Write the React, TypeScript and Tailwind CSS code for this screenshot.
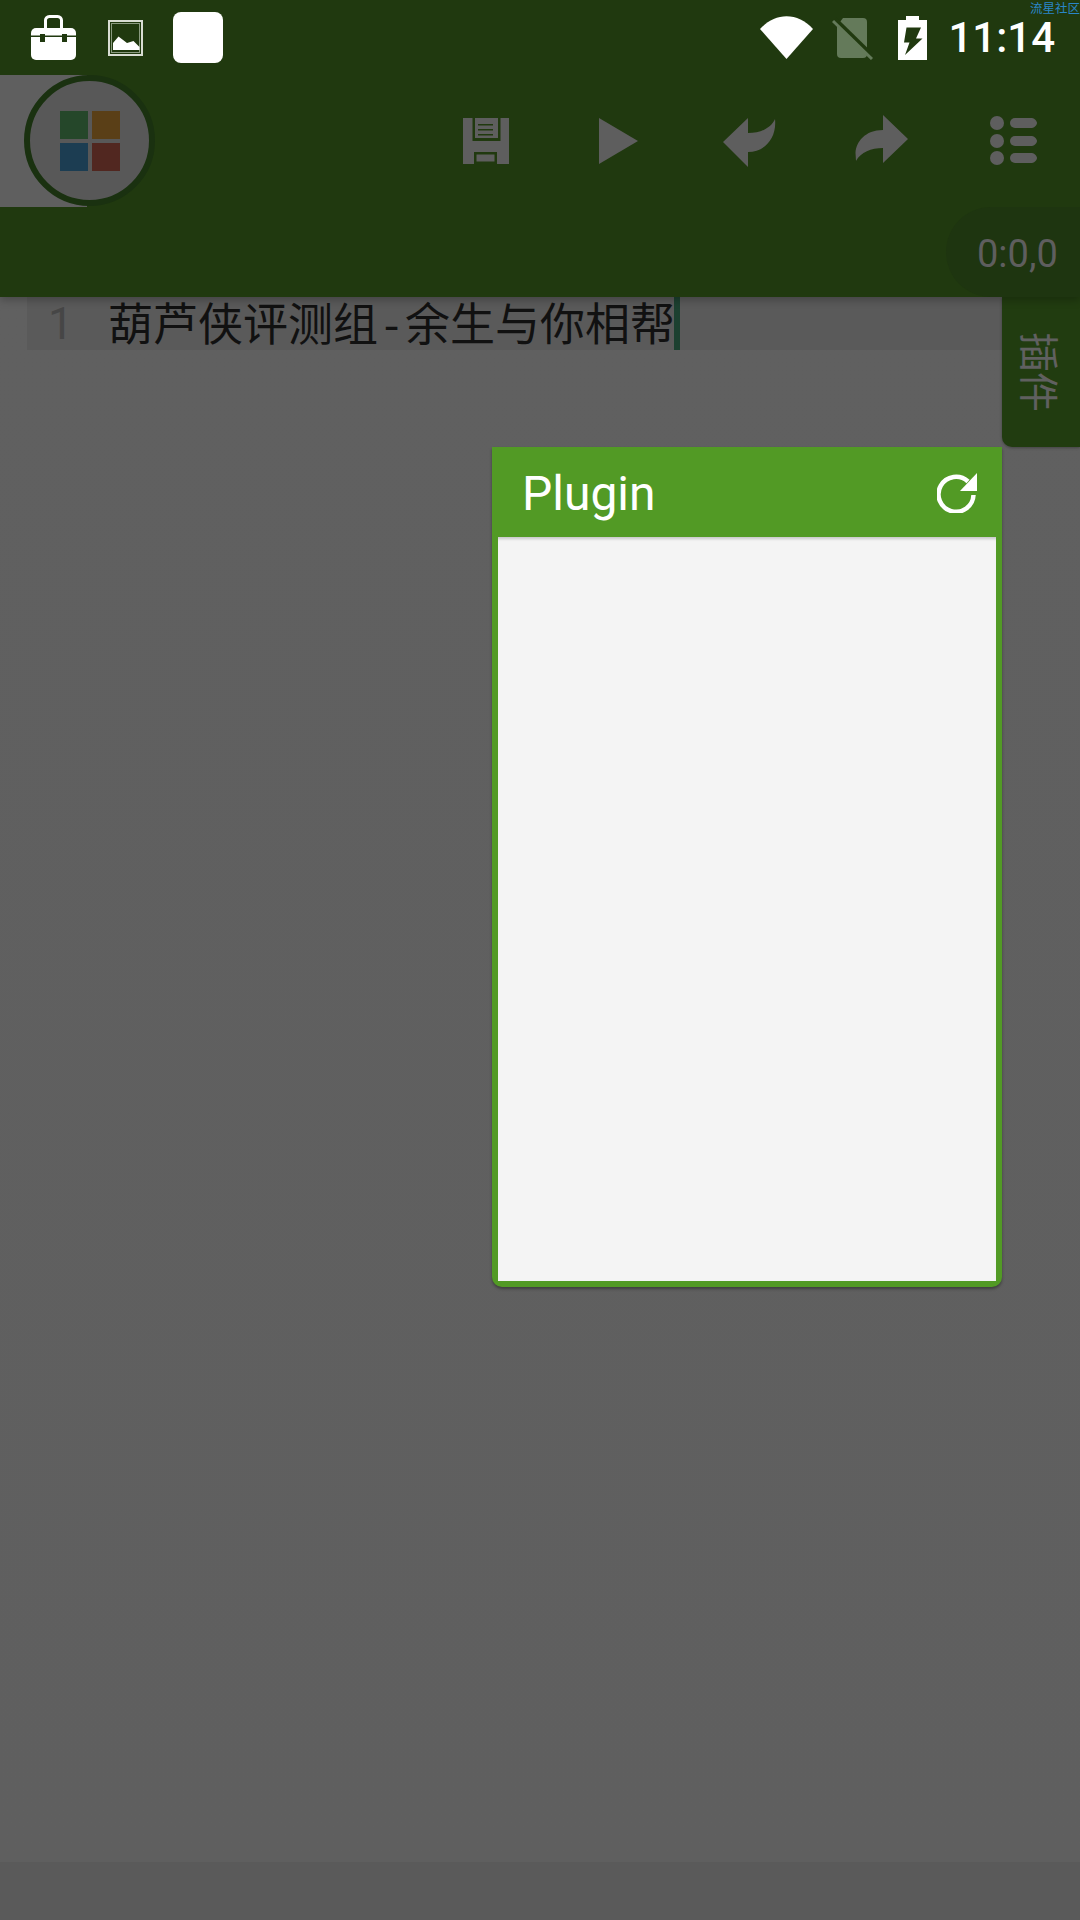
const gray = "#5e5e5e";
const headerGreen = "#20390f";

function Briefcase() {
  return (
    <svg width="45" height="45" viewBox="0 0 45 45" className="ml-[31px] mt-[-1px]">
      <path d="M14.5 13V6a4 4 0 0 1 4-4.5h8a4 4 0 0 1 4 4.5v7" fill="none" stroke="#fff" strokeWidth="3" />
      <rect x="0" y="13" width="45" height="32" rx="5" fill="#fff" />
      <rect x="0" y="20.5" width="45" height="1.5" fill={headerGreen} />
      <rect x="9" y="19" width="5" height="8" fill={headerGreen} />
      <rect x="31" y="19" width="5" height="8" fill={headerGreen} />
    </svg>
  );
}

function PictureIcon() {
  return (
    <svg width="35" height="36" viewBox="0 0 35 36" className="ml-[32px]">
      <rect x="1" y="1" width="33" height="34" fill="none" stroke="#d8ddd3" strokeWidth="2" />
      <rect x="3.5" y="3.5" width="28" height="29" fill="none" stroke="#8a9a80" strokeWidth="1" />
      <path d="M5 30V23l5.5-6.5L19 23l6.5-2 6 6v3z" fill="#fff" />
    </svg>
  );
}

function StatusBar() {
  return (
    <div className="relative flex h-[75px] items-center">
      <Briefcase />
      <PictureIcon />
      <div className="ml-[30px] h-[51px] w-[50px] rounded-[8px] bg-white" />
      <div className="ml-auto flex items-center pr-[25px]">
        <svg width="53" height="43" viewBox="0 0 53 43" className="mt-[-1px]">
          <path d="M0 13C15-4 38-4 53 13L26.5 43z" fill="#fff" />
        </svg>
        <svg width="41" height="44" viewBox="0 0 41 44" className="ml-[19px] mt-px">
          <path d="M11 2h20a4 4 0 0 1 4 4v32a4 4 0 0 1-4 4H9a4 4 0 0 1-4-4V10z" fill="#647a5a" />
          <path d="M3 3l39 38" stroke={headerGreen} strokeWidth="4" />
          <path d="M1 5l39 38" stroke="#647a5a" strokeWidth="3" />
        </svg>
        <svg width="29" height="44" viewBox="0 0 29 44" className="ml-[25px]">
          <path
            fillRule="evenodd"
            fill="#fff"
            d="M8 0h13v4h8v40H0V4h8zM8.5 11.5H23L18 22.5H24.5L7 39 11.5 26.5H6z"
          />
        </svg>
        <span className="ml-[21px] font-['Roboto',sans-serif] text-[42px] leading-none font-medium text-white">
          11:14
        </span>
      </div>
      <span className="absolute top-0 right-0 font-['Noto_Sans_CJK_SC',sans-serif] text-[12.5px] leading-[15px] text-[#2a86c8]">
        流星社区
      </span>
    </div>
  );
}

function Logo() {
  return (
    <div className="relative h-[132px] w-[87px] bg-[#5f5f5f]">
      <div className="absolute top-0 left-[24px] flex h-[131px] w-[131px] items-center justify-center rounded-full border-[6px] border-[#1a3110] bg-[#585858]">
        <div className="grid grid-cols-[28px_28px] grid-rows-[28px_28px] gap-[4px]">
          <div className="bg-[#25472a]" />
          <div className="bg-[#5a3f17]" />
          <div className="bg-[#1c3d52]" />
          <div className="bg-[#512720]" />
        </div>
      </div>
    </div>
  );
}

function ToolButton({ children }: { children: React.ReactNode }) {
  return <div className="flex h-[132px] w-[132px] items-center justify-center">{children}</div>;
}

function Toolbar() {
  return (
    <div className="flex h-[132px] items-center pr-px">
      <Logo />
      <div className="ml-auto flex">
        <ToolButton>
          <svg width="46" height="46" viewBox="0 0 46 46" className="ml-[2px]">
            <rect width="46" height="46" fill={gray} />
            <rect x="9.5" y="0" width="28" height="23" fill={headerGreen} />
            <rect x="12" y="0" width="23" height="20" fill={gray} />
            <rect x="15" y="6" width="15" height="1.5" fill={headerGreen} />
            <rect x="15" y="11" width="15" height="1.5" fill={headerGreen} />
            <rect x="15" y="16" width="15" height="1.5" fill={headerGreen} />
            <rect x="11" y="34" width="23" height="12" fill={headerGreen} />
            <rect x="13.5" y="36.5" width="18" height="7" fill={gray} />
          </svg>
        </ToolButton>
        <ToolButton>
          <svg width="39" height="46" viewBox="0 0 39 46" className="ml-[3px]">
            <path d="M0 0l39 23L0 46z" fill={gray} />
          </svg>
        </ToolButton>
        <ToolButton>
          <svg width="53" height="49" viewBox="0 0 53 49" className="mt-[2px]">
            <path d="M25 0V15C38 15 48 10 52 1 54 20 42 34 25 34V49L0 24z" fill={gray} />
          </svg>
        </ToolButton>
        <ToolButton>
          <svg width="53" height="49" viewBox="0 0 53 49" className="mt-[-3px]">
            <path d="M28 0V15C10 15 1 27 .5 38L1 46C6 37 16 33 28 33V48L53 24z" fill={gray} />
          </svg>
        </ToolButton>
        <ToolButton>
          <svg width="47" height="50" viewBox="0 0 47 50">
            <circle cx="7" cy="7" r="7" fill={gray} />
            <circle cx="7" cy="25" r="7" fill={gray} />
            <circle cx="7" cy="42" r="7" fill={gray} />
            <path d="M25 2h17c2 0 5 3 5 5s-3 5-5 5H25a5 5 0 0 1 0-10z" fill={gray} />
            <path d="M25 20h17c2 0 5 3 5 5s-3 5-5 5H25a5 5 0 0 1 0-10z" fill={gray} />
            <path d="M25 37h17c2 0 5 3 5 5s-3 5-5 5H25a5 5 0 0 1 0-10z" fill={gray} />
          </svg>
        </ToolButton>
      </div>
    </div>
  );
}

function PluginPanel() {
  return (
    <div className="absolute top-[150px] right-[78px] flex h-[840px] w-[510px] flex-col rounded-b-[10px] bg-[#529a25] shadow-[0_2px_3px_rgba(0,0,0,0.35)]">
      <div className="flex h-[90px] items-center justify-between pr-[25px] pl-[30px]">
        <span className="mt-[3px] font-['Roboto',sans-serif] text-[48px] leading-none text-white">Plugin</span>
        <svg width="40" height="41" viewBox="0 0 40 41">
          <path d="M31 9.5A17.5 17.5 0 1 0 36.5 23" fill="none" stroke="#fff" strokeWidth="4.5" />
          <path d="M40 1v18H23z" fill="#fff" />
        </svg>
      </div>
      <div className="mx-[6px] mb-[6px] flex-1 bg-[#f4f4f4] shadow-[inset_0_4px_3px_-2px_rgba(0,0,0,0.18)]" />
    </div>
  );
}

export default function App() {
  return (
    <div className="flex h-[1920px] w-[1080px] flex-col overflow-hidden bg-[#606060]">
      <header className="relative z-10 h-[297px] bg-[#20390f] shadow-[0_3px_8px_rgba(0,0,0,0.25)]">
        <StatusBar />
        <Toolbar />
        <div className="flex justify-end">
          <div className="flex h-[90px] w-[134px] items-center rounded-l-[45px] bg-[#1e3510] pl-[31px]">
            <span className="mt-[4px] font-['Roboto',sans-serif] text-[38px] leading-none text-[#5e5e5e]">0:0,0</span>
          </div>
        </div>
      </header>

      <main className="relative flex-1 bg-gradient-to-b from-[#606060] to-[#5f5f5f]">
        <div className="ml-[27px] flex h-[53px] w-[975px] items-center bg-[#5a5a5a]">
          <span className="w-[81px] pl-[21px] font-['Roboto',sans-serif] text-[45px] leading-none text-[#464646]">1</span>
          <span className="mb-[5px] font-['Noto_Sans_CJK_SC',sans-serif] text-[45px] leading-none text-[#111111]">
            葫芦侠评测组<span className="inline-block w-[27px] text-center">-</span>余生与你相帮
          </span>
          <div className="ml-[-1px] h-[53px] w-[6px] bg-[#1c4030]" />
        </div>

        <div className="absolute top-0 right-0 flex h-[150px] w-[78px] items-center justify-center rounded-bl-[10px] bg-[#213c10] shadow-[0_1px_3px_rgba(0,0,0,0.3)]">
          <span className="font-['Noto_Sans_CJK_SC',sans-serif] text-[40px] leading-none text-[#606060] [text-orientation:sideways] [writing-mode:vertical-rl]">
            插件
          </span>
        </div>

        <PluginPanel />
      </main>

      <div className="h-[58px] bg-[#5a5a5a]" />
    </div>
  );
}
